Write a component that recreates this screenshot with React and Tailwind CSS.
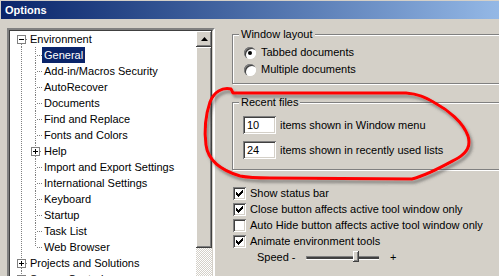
import React from "react";

const TREE = [
  { label: "Environment", level: 0, box: "minus", first: true },
  { label: "General", level: 1, selected: true },
  { label: "Add-in/Macros Security", level: 1 },
  { label: "AutoRecover", level: 1 },
  { label: "Documents", level: 1 },
  { label: "Find and Replace", level: 1 },
  { label: "Fonts and Colors", level: 1 },
  { label: "Help", level: 1, box: "plus" },
  { label: "Import and Export Settings", level: 1 },
  { label: "International Settings", level: 1 },
  { label: "Keyboard", level: 1 },
  { label: "Startup", level: 1 },
  { label: "Task List", level: 1 },
  { label: "Web Browser", level: 1, last: true },
  { label: "Projects and Solutions", level: 0, box: "plus" },
  { label: "Source Control", level: 0, box: "plus" },
];

const raised =
  "shadow-[inset_-1px_-1px_#404040,inset_1px_1px_#ffffff,inset_-2px_-2px_#808080,inset_2px_2px_#d4d0c8]";
const sunken =
  "shadow-[inset_1px_1px_#808080,inset_-1px_-1px_#ffffff,inset_2px_2px_#404040,inset_-2px_-2px_#d4d0c8]";

const Dots = ({ x1, y1, x2, y2 }) => (
  <line
    x1={x1}
    y1={y1}
    x2={x2}
    y2={y2}
    stroke="#808080"
    strokeDasharray="1 1"
    shapeRendering="crispEdges"
  />
);

const Expander = ({ cx, kind }) => (
  <g shapeRendering="crispEdges">
    <rect x={cx - 3.5} y={4.5} width={8} height={8} fill="#fff" stroke="#808080" />
    <line x1={cx - 2} y1={8.5} x2={cx + 3} y2={8.5} stroke="#000" />
    {kind === "plus" && <line x1={cx + 0.5} y1={6} x2={cx + 0.5} y2={11} stroke="#000" />}
  </g>
);

// one 16px row of the tree, connectors drawn per cell
const TreeRow = ({ item }) => {
  const rootCell = (
    <svg width="15" height="16" className="shrink-0">
      {item.level === 0 ? (
        <>
          {!item.first && <Dots x1={8.5} y1={0} x2={8.5} y2={4} />}
          <Dots x1={8.5} y1={13} x2={8.5} y2={16} />
          <Dots x1={13} y1={8.5} x2={15} y2={8.5} />
          <Expander cx={8} kind={item.box} />
        </>
      ) : (
        <Dots x1={8.5} y1={0} x2={8.5} y2={16} />
      )}
    </svg>
  );

  const childCell =
    item.level === 1 ? (
      <svg width="14" height="16" className="shrink-0">
        <Dots x1={7.5} y1={0} x2={7.5} y2={item.box ? 4 : 8} />
        {!item.last && <Dots x1={7.5} y1={item.box ? 13 : 9} x2={7.5} y2={16} />}
        <Dots x1={item.box ? 12 : 9} y1={8.5} x2={14} y2={8.5} />
        {item.box && <Expander cx={7} kind={item.box} />}
      </svg>
    ) : null;

  return (
    <div className="flex h-[16px] items-center">
      {rootCell}
      {childCell}
      <span
        className={
          "h-[16px] whitespace-nowrap px-[2px] leading-[16px] " +
          (item.selected ? "bg-[#0A246A] text-white" : "text-black")
        }
      >
        {item.label}
      </span>
    </div>
  );
};

const Radio = ({ checked }) => (
  <div className="relative flex h-[12px] w-[12px] shrink-0 items-center justify-center rounded-full bg-white shadow-[inset_1px_1px_#808080,inset_2px_2px_#404040,inset_-1px_-1px_#ffffff]">
    {checked && <div className="h-[4px] w-[4px] rounded-full bg-black" />}
  </div>
);

const Checkbox = ({ checked }) => (
  <div className={"flex h-[13px] w-[13px] shrink-0 items-center justify-center bg-white " + sunken}>
    {checked && (
      <svg width="7" height="7" viewBox="0 0 7 7" shapeRendering="crispEdges">
        <path d="M0 2h1v1h1v1h1v-1h1v-1h1v-1h1v-1h1v3h-1v1h-1v1h-1v1h-1v1h-1v-1h-1v-1h-1z" fill="#000" />
      </svg>
    )}
  </div>
);

const NumberBox = ({ value }) => (
  <div className={"flex h-[18px] w-[33px] shrink-0 items-center bg-white pl-[4px] " + sunken}>{value}</div>
);

const groupBox =
  "w-[290px] border border-[#808080] shadow-[inset_1px_1px_#ffffff,1px_1px_#ffffff]";
const legend = "ml-[6px] bg-[#D4D0C8] px-[2px] leading-[13px]";

export default function App() {
  return (
    <div className="relative h-[276px] w-[499px] overflow-hidden bg-[#D4D0C8] font-['Liberation_Sans',Arial,sans-serif] text-[11px] text-black">
      {/* caption */}
      <div className="ml-[1px] mt-[1px] flex h-[18px] items-center bg-gradient-to-r from-[#0A246A] to-[#94B8E6] pl-[4px] text-[11px] font-bold text-white">
        Options
      </div>

      <div className="flex">
        {/* category tree */}
        <div className="ml-[7px] mt-[9px] flex h-[260px] w-[208px] shrink-0 border-2 border-t-[#808080] border-r-white border-b-white border-l-[#808080]">
          <div className="flex flex-1 border border-t-[#404040] border-r-[#D4D0C8] border-b-[#D4D0C8] border-l-[#404040] bg-white">
            <div className="flex-1 overflow-hidden pl-[3px]">
              {TREE.map((item) => (
                <TreeRow key={item.label} item={item} />
              ))}
            </div>
            <div className="flex w-[16px] flex-col">
              <div className={"flex h-[16px] items-center justify-center bg-[#D4D0C8] " + raised}>
                <svg width="7" height="4" viewBox="0 0 7 4">
                  <polygon points="3.5,0 7,4 0,4" fill="#000" />
                </svg>
              </div>
              <div className={"h-[201px] bg-[#D4D0C8] " + raised} />
              <div className="flex-1 bg-[conic-gradient(#d4d0c8_25%,#ffffff_0_50%,#d4d0c8_0_75%,#ffffff_0)] bg-[length:2px_2px]" />
            </div>
          </div>
        </div>

        {/* settings */}
        <div className="ml-[17px] mt-[9px] flex flex-col">
          <fieldset className={groupBox}>
            <legend className={legend}>Window layout</legend>
            <div className="pb-[5px] pl-[11px] pt-[3px]">
              <div className="flex h-[17px] items-center gap-[5px]">
                <Radio checked />
                <span>Tabbed documents</span>
              </div>
              <div className="flex h-[17px] items-center gap-[5px]">
                <Radio />
                <span>Multiple documents</span>
              </div>
            </div>
          </fieldset>

          <fieldset className={"mt-[12px] " + groupBox}>
            <legend className={legend}>Recent files</legend>
            <div className="flex flex-col gap-[7px] pb-[10px] pl-[10px] pt-[7px]">
              <div className="flex items-center gap-[4px]">
                <NumberBox value="10" />
                <span>items shown in Window menu</span>
              </div>
              <div className="flex items-center gap-[4px]">
                <NumberBox value="24" />
                <span>items shown in recently used lists</span>
              </div>
            </div>
          </fieldset>

          <div className="mt-[15px] flex flex-col pl-[1px]">
            {[
              ["Show status bar", true],
              ["Close button affects active tool window only", true],
              ["Auto Hide button affects active tool window only", false],
              ["Animate environment tools", true],
            ].map(([label, on]) => (
              <div key={label} className="flex h-[16px] items-center gap-[4px] whitespace-nowrap">
                <Checkbox checked={on} />
                <span>{label}</span>
              </div>
            ))}
            <div className="flex h-[16px] items-center pl-[24px]">
              <span className="w-[49px] shrink-0">Speed -</span>
              <div className="relative flex h-[16px] w-[73px] items-center">
                <div className="h-[3px] w-full border-t border-l border-t-[#808080] border-l-[#808080] bg-[#404040] shadow-[0_1px_#ffffff]" />
                <div className={"absolute left-[47px] top-[2px] h-[11px] w-[6px] bg-[#D4D0C8] " + raised} />
              </div>
              <span className="ml-[11px]">+</span>
            </div>
          </div>
        </div>
      </div>

      {/* freehand red annotation */}
      <svg className="pointer-events-none absolute left-0 top-0" width="499" height="276">
        <defs>
          <filter id="ink" x="-10%" y="-10%" width="120%" height="130%">
            <feDropShadow dx="2" dy="3" stdDeviation="1.5" floodColor="#404040" floodOpacity="0.55" />
          </filter>
        </defs>
        <path
          d="M406 93 L233 93 L231 89 C222 87 214 92 210 102 C206 114 204 130 206 145 C208 160 220 170 240 176 C250 178 260 178 270 178 L412 179 C428 175 445 165 458 158 C468 152 471 145 468 136 C463 122 448 110 435 103 C425 97 418 94 406 93"
          fill="none"
          stroke="#ff0000"
          strokeWidth="3"
          strokeLinejoin="round"
          strokeLinecap="round"
          filter="url(#ink)"
        />
      </svg>
    </div>
  );
}
